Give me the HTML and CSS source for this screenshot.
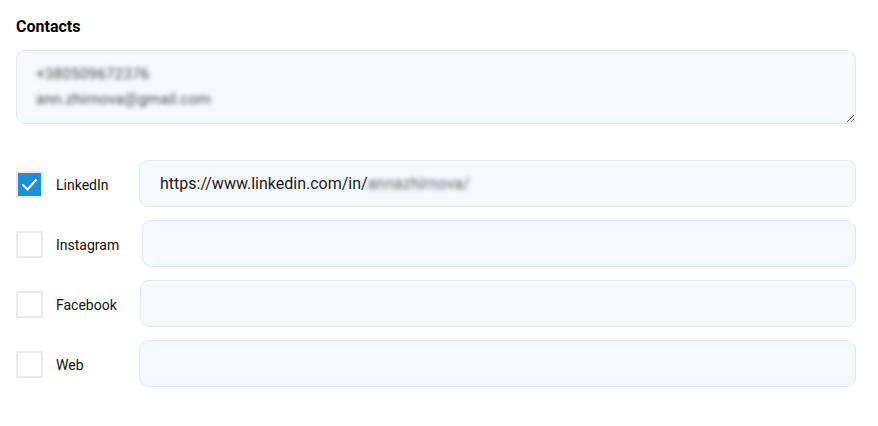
FILE: index.html
```html
<!DOCTYPE html>
<html>
<head>
<meta charset="utf-8">
<link rel="stylesheet" href="styles.css">
</head>
<body>
<section class="contacts">
  <h2 class="title">Contacts</h2>
  <textarea class="notes" rows="2">+380509672376
ann.zhirnova@gmail.com</textarea>
  <div class="links">
    <div class="row">
      <span class="check checked">
        <svg viewBox="0 0 23 23" width="23" height="23"><path d="M5 12 L9.5 16.5 L18 7" fill="none" stroke="#fff" stroke-width="2" stroke-linecap="round" stroke-linejoin="round"/></svg>
      </span>
      <span class="label">LinkedIn</span>
      <div class="field"><span class="url">https://www.linkedin.com/in/</span><span class="hidden">annazhirnova/</span></div>
    </div>
    <div class="row">
      <span class="check"></span>
      <span class="label">Instagram</span>
      <div class="field"></div>
    </div>
    <div class="row">
      <span class="check"></span>
      <span class="label">Facebook</span>
      <div class="field"></div>
    </div>
    <div class="row">
      <span class="check"></span>
      <span class="label">Web</span>
      <div class="field"></div>
    </div>
  </div>
</section>
</body>
</html>
```
FILE: styles.css
```css
* { box-sizing: border-box; }
body {
  margin: 0;
  padding: 16px 22px 0 16px;
  font-family: Roboto, "Liberation Sans", sans-serif;
  background: #fff;
  color: #111;
}
.title {
  margin: 0;
  padding-top: 2px;
  font-size: 16px;
  font-weight: 700;
  line-height: 18px;
  color: #000;
}
.notes {
  display: block;
  width: 100%;
  height: 74px;
  margin-top: 14px;
  padding: 11px 19px 9px;
  border: 1px solid #e3e8f4;
  border-radius: 9px;
  background: #f5f9fe;
  font-family: Roboto, "Liberation Sans", sans-serif;
  font-size: 15.5px;
  line-height: 25px;
  color: transparent;
  text-shadow: 0 0 4px rgba(40, 40, 40, 0.8);
  outline: none;
  resize: vertical;
}
.links {
  display: flex;
  flex-direction: column;
  gap: 13px;
  margin-top: 36px;
}
.row {
  display: flex;
  align-items: center;
}
.check {
  flex: none;
  width: 27px;
  height: 27px;
  margin-top: 2px;
  border: 2px solid #e9eaec;
  border-radius: 2px;
  background: #fff;
  display: flex;
  align-items: center;
  justify-content: center;
}
.check.checked {
  background: #1b8fd7;
}
.label {
  flex: none;
  min-width: 60px;
  margin-left: 13px;
  margin-right: 23px;
  padding-top: 2px;
  font-size: 14px;
  color: #111;
}
.field {
  flex: 1;
  height: 47px;
  border: 1px solid #e3e8f4;
  border-radius: 9px;
  background: #f5f9fe;
  display: flex;
  align-items: center;
  padding-left: 20px;
  font-size: 16px;
  color: #1a1a1a;
}
.hidden {
  color: transparent;
  text-shadow: 0 0 4px rgba(80, 80, 80, 0.85);
}
```
